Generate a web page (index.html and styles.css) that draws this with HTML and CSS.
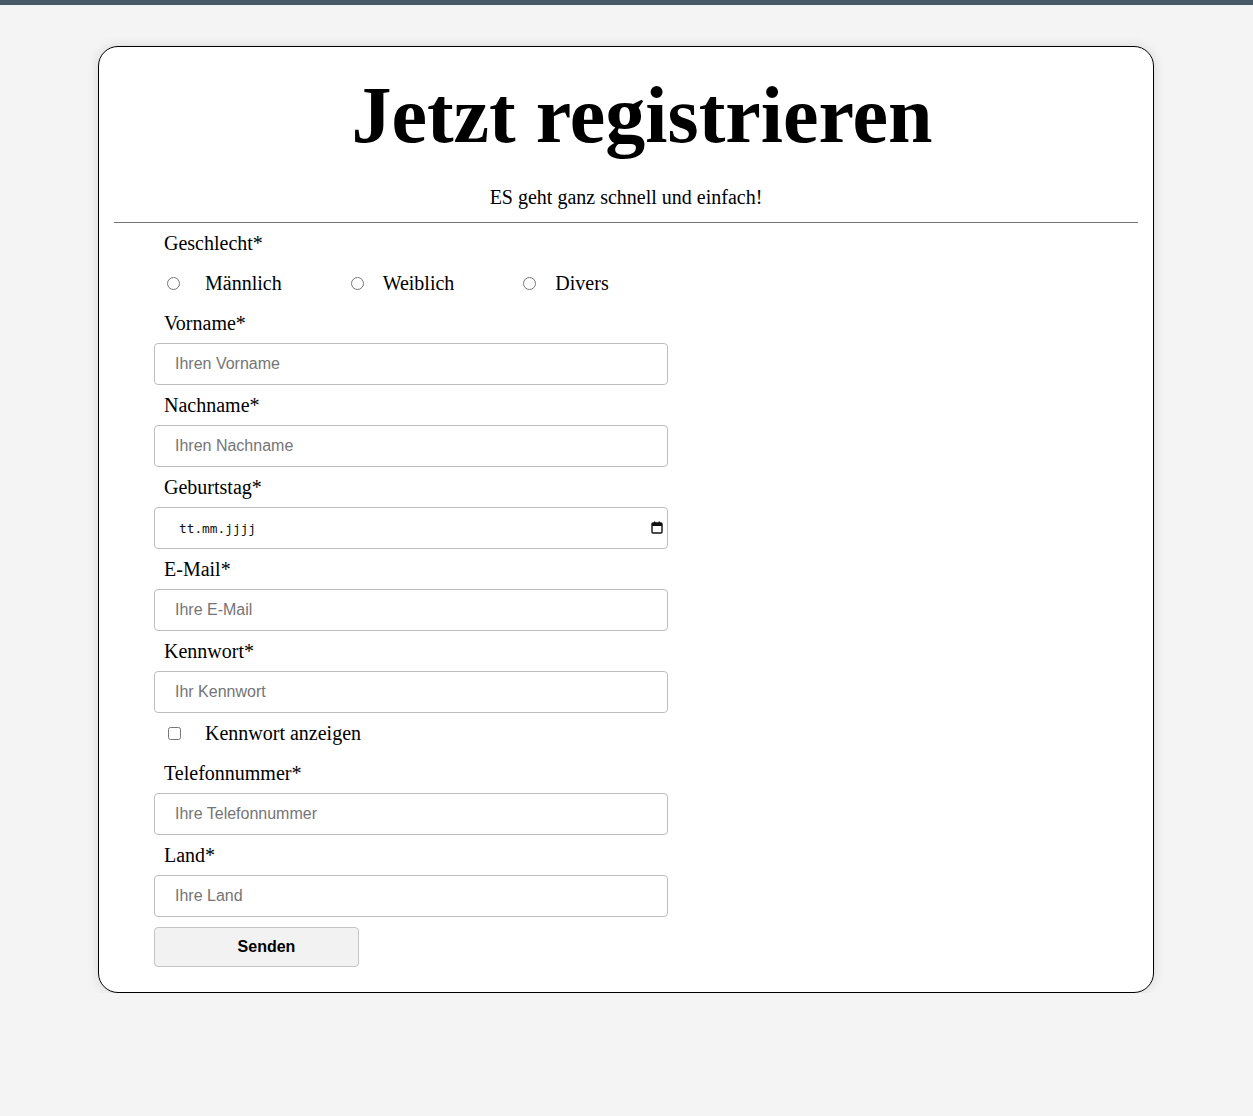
FILE: index.html
```html
<!DOCTYPE html>
<html lang="de">
<head>
<meta charset="utf-8">
<title>Jetzt registrieren</title>
<link rel="stylesheet" href="styles.css">
</head>
<body>
<div class="topbar"></div>
<div class="card">
  <h1 class="title">Jetzt registrieren</h1>
  <p class="subtitle">ES geht ganz schnell und einfach!</p>
  <hr class="divider">
  <form class="form">
    <div class="label">Geschlecht*</div>
    <div class="radio-row">
      <label class="choice choice-m"><input type="radio" name="g" class="radio"><span class="choice-text">Männlich</span></label>
      <label class="choice choice-w"><input type="radio" name="g" class="radio"><span class="choice-text">Weiblich</span></label>
      <label class="choice choice-d"><input type="radio" name="g" class="radio"><span class="choice-text">Divers</span></label>
    </div>
    <label class="label">Vorname*</label>
    <input class="field" type="text" placeholder="Ihren Vorname">
    <label class="label">Nachname*</label>
    <input class="field" type="text" placeholder="Ihren Nachname">
    <label class="label">Geburtstag*</label>
    <div class="field date-field">
      <span class="date-text">tt.mm.jjjj</span>
      <svg class="cal-icon" width="12" height="13" viewBox="0 0 12 13">
        <rect x="1" y="2" width="10" height="10" fill="none" stroke="#111" stroke-width="1.4" rx="1"/>
        <rect x="1" y="2" width="10" height="3" fill="#111"/>
        <rect x="3" y="0.5" width="1.4" height="2.5" fill="#111"/>
        <rect x="7.6" y="0.5" width="1.4" height="2.5" fill="#111"/>
      </svg>
    </div>
    <label class="label">E-Mail*</label>
    <input class="field" type="email" placeholder="Ihre E-Mail">
    <label class="label">Kennwort*</label>
    <input class="field" type="password" placeholder="Ihr Kennwort">
    <label class="check-row"><input type="checkbox" class="checkbox"><span class="choice-text">Kennwort anzeigen</span></label>
    <label class="label">Telefonnummer*</label>
    <input class="field" type="tel" placeholder="Ihre Telefonnummer">
    <label class="label">Land*</label>
    <input class="field" type="text" placeholder="Ihre Land">
    <button class="submit" type="button">Senden</button>
  </form>
</div>
</body>
</html>
```
FILE: styles.css
```css
html, body {
  margin: 0;
  padding: 0;
}
body {
  background: #f4f4f4;
  font-family: "Liberation Serif", "Times New Roman", serif;
  color: #000;
}
.topbar {
  height: 5px;
  background: #465a66;
}
.card {
  width: 1054px;
  margin: 41px 0 0 98px;
  background: #fff;
  border: 1px solid #000;
  border-radius: 20px;
  box-shadow: 0 0 12px rgba(0, 0, 0, 0.12);
  padding-bottom: 25px;
}
.title {
  margin: 22px 0 0;
  padding-left: 32px;
  font-size: 80px;
  line-height: 92px;
  font-weight: bold;
  text-align: center;
}
.subtitle {
  margin: 24px 0 0;
  font-size: 20px;
  line-height: 24px;
  text-align: center;
}
.divider {
  margin: 13px 15px 0;
  border: 0;
  border-top: 1px solid #7d7070;
  height: 0;
}
.form {
  display: flex;
  flex-direction: column;
  align-items: flex-start;
  padding-left: 55px;
}
.label {
  display: block;
  font-size: 20px;
  line-height: 20px;
  padding: 10px 10px;
}
.radio-row {
  display: flex;
  align-items: center;
  height: 40px;
  padding-left: 13px;
}
.choice {
  display: flex;
  align-items: center;
  font-size: 20px;
}
.radio, .checkbox {
  width: 13px;
  height: 13px;
  margin: 0;
}
.choice-text {
  font-size: 20px;
  line-height: 20px;
}
.choice-m .choice-text { margin-left: 25px; }
.choice-w { margin-left: 69px; }
.choice-w .choice-text { margin-left: 19px; }
.choice-d { margin-left: 69px; }
.choice-d .choice-text { margin-left: 19px; }
.field {
  box-sizing: border-box;
  width: 514px;
  height: 42px;
  border: 1px solid #bdbdbd;
  border-radius: 4px;
  padding: 0 20px;
  font-family: "Liberation Sans", Arial, sans-serif;
  font-size: 16px;
  background: #fff;
  margin: 0;
  outline: none;
}
.field::placeholder {
  color: #757575;
}
.date-field {
  display: flex;
  align-items: center;
  justify-content: space-between;
  padding: 0 4px 0 24px;
}
.date-text {
  font-family: "DejaVu Sans Mono", "Liberation Mono", monospace;
  font-size: 12.8px;
  color: #111;
}
.cal-icon {
  display: block;
  margin-top: -2px;
}
.check-row {
  display: flex;
  align-items: center;
  height: 40px;
  padding-left: 14px;
}
.check-row .choice-text {
  margin-left: 24px;
}
.submit {
  margin-top: 10px;
  width: 205px;
  height: 40px;
  padding: 0 0 0 20px;
  background: #f2f2f2;
  border: 1px solid #c4c4c4;
  border-radius: 4px;
  font-family: "Liberation Sans", Arial, sans-serif;
  font-size: 16px;
  font-weight: bold;
  color: #000;
}
```
